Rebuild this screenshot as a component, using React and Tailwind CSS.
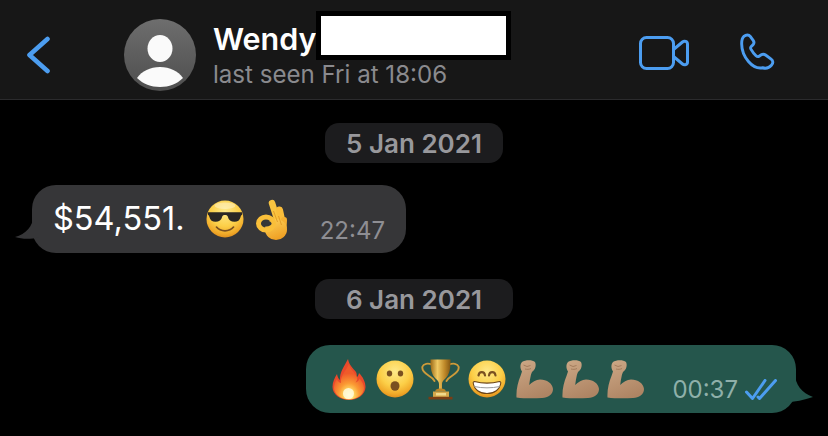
import React from "react";

const FaceGrad = ({ id }) => (
  <radialGradient id={id} cx="50%" cy="30%" r="72%">
    <stop offset="0" stopColor="#fee98a" />
    <stop offset="0.55" stopColor="#fccf48" />
    <stop offset="0.85" stopColor="#f0a828" />
    <stop offset="1" stopColor="#dc8a1c" />
  </radialGradient>
);

const Cool = () => (
  <svg width="38" height="38" viewBox="0 0 40 40" className="shrink-0">
    <defs>
      <FaceGrad id="cg" />
    </defs>
    <circle cx="20" cy="20" r="19.500" fill="url(#cg)" />
    <ellipse cx="20" cy="6" rx="11" ry="3.500" fill="#fff" opacity="0.35" />
    <path d="M2 13h36v2.600c-.8.300-1.200.8-1.500 2-.9 3.700-3.200 5.400-6.500 5.400-3.800 0-6.200-2-7-5.400-.3-1.200-1.200-1.700-3-1.700s-2.700.5-3 1.700c-.8 3.400-3.200 5.400-7 5.400-3.300 0-5.600-1.700-6.500-5.400-.3-1.200-.7-1.700-1.500-2z" fill="#2a2725" />
    <path d="M11 28.500c2.500 3 5.500 4 9 4s6.500-1 9-4" fill="none" stroke="#7a5020" strokeWidth="1.800" strokeLinecap="round" />
  </svg>
);

const Ok = () => (
  <svg width="32" height="41" viewBox="0 0 32 41" className="ml-[12px] shrink-0">
    <defs>
      <linearGradient id="og" x1="0" x2="0.4" y1="0" y2="1">
        <stop offset="0" stopColor="#fdd35a" />
        <stop offset="1" stopColor="#efa125" />
      </linearGradient>
    </defs>
    <g fill="none" strokeLinecap="round">
      <path d="M16 4l6 19" strokeWidth="6.500" stroke="#f9c440" />
      <path d="M23.500 11l3 14" strokeWidth="7" stroke="#fabd3a" />
      <path d="M28 21l-.5 9" strokeWidth="6" stroke="#f5b032" />
    </g>
    <ellipse cx="20" cy="30.500" rx="11" ry="10.500" fill="url(#og)" />
    <ellipse cx="10" cy="24.500" rx="7.500" ry="6.500" fill="none" stroke="#f9bf3a" strokeWidth="5" />
    <ellipse cx="10.500" cy="24.500" rx="5" ry="3" fill="#363638" />
    <path d="M17.500 12l4 11M22.500 17l3 9" fill="none" stroke="#dd9220" strokeWidth="0.800" />
  </svg>
);

const Fire = () => (
  <svg width="34" height="41" viewBox="0 0 34 41" className="shrink-0">
    <defs>
      <radialGradient id="fg" cx="50%" cy="88%" r="62%">
        <stop offset="0" stopColor="#fff9d0" />
        <stop offset="0.22" stopColor="#ffe06a" />
        <stop offset="0.55" stopColor="#fb9a33" />
        <stop offset="1" stopColor="#ef5a2a" />
      </radialGradient>
    </defs>
    <path d="M16 0c1 6 5 9 8 13 1 2 1 4 0 6 1.500-1 2.500-3 3-5 4 4 6.500 9 6.500 14 0 7-7.500 13-16.500 13S.5 35 .5 28c0-5 2-9 4.500-13 .5 3 1.500 5 3 6-.5-8 4-13 8-21z" fill="#e9492b" />
    <path d="M17 5c1 5 5 8 7.500 12 1.500 3 .5 5-1 6.500 2-.5 3.500-2 4-4 2.500 3 4.500 6 4.500 9.500 0 6.500-7 11.500-15 11.500S2 35 2 29c0-3.500 1-6.500 3-9 .5 2 2 3.500 4 4-1-7 5-12 8-19z" fill="url(#fg)" />
    <ellipse cx="16.500" cy="34.500" rx="5.500" ry="5.500" fill="#fffbe0" opacity="0.85" />
  </svg>
);

const Wow = () => (
  <svg width="38" height="38" viewBox="0 0 38 38" className="ml-[10px] shrink-0">
    <defs>
      <FaceGrad id="wg" />
    </defs>
    <circle cx="19" cy="19" r="18.500" fill="url(#wg)" />
    <ellipse cx="13.500" cy="13.500" rx="2.700" ry="3" fill="#7a5020" />
    <ellipse cx="24.500" cy="13.500" rx="2.700" ry="3" fill="#7a5020" />
    <ellipse cx="19" cy="26" rx="4.500" ry="4.800" fill="#7a5020" />
  </svg>
);

const Trophy = () => (
  <svg width="40" height="41" viewBox="0 0 40 41" className="ml-[7px] shrink-0">
    <defs>
      <linearGradient id="tg" x1="0" x2="1" y1="0" y2="0">
        <stop offset="0" stopColor="#9c6a18" />
        <stop offset="0.35" stopColor="#f0c963" />
        <stop offset="0.7" stopColor="#c08a2a" />
        <stop offset="1" stopColor="#845612" />
      </linearGradient>
    </defs>
    <path d="M11 5.500C7 4 2.500 4.500 1.500 7.500c-1 3.500 2 6.500 6 9 2.500 1.500 4.500 3 6 5.500M28 5.500c4-1.500 8.500-1 9.500 2 1 3.500-2 6.500-6 9-2.500 1.500-4.500 3-6 5.500" fill="none" stroke="#cd9b3a" strokeWidth="1.900" strokeLinecap="round" />
    <path d="M9.500 0.500h20c.3 8.500-1 15.500-5.500 19.500-1.700 1.500-3 2.500-3 5v7h-3v-7c0-2.500-1.300-3.500-3-5C10.500 16 9.200 9 9.500.5z" fill="url(#tg)" />
    <path d="M15 30.500c2-1.500 7-1.500 9 0l1 2H14z" fill="#b98428" />
    <path d="M12 32.500h16v5.500H12z" fill="#d6a74b" />
    <path d="M15 34h10v2.500H15z" fill="#f1d98c" />
    <path d="M7.500 37.800h24V40.500h-24z" fill="#7b3d14" />
  </svg>
);

const Grin = () => (
  <svg width="38" height="38" viewBox="0 0 38 38" className="ml-[7px] shrink-0">
    <defs>
      <FaceGrad id="gg" />
    </defs>
    <circle cx="19" cy="19" r="18.500" fill="url(#gg)" />
    <path d="M10.500 15.500c.6-4.500 6-4.500 6.500 0M21 15.500c.5-4.500 6-4.500 6.500 0" fill="none" stroke="#7a5020" strokeWidth="2.200" strokeLinecap="round" />
    <path d="M6.500 21.500c7.500 2 17.500 2 25 0 1 .1 1.400.7 1.300 1.500C31.800 29.500 26.500 33.500 19 33.500S6.200 29.500 5.200 23c-.1-.8.300-1.400 1.300-1.500z" fill="#fff" stroke="#6b4418" strokeWidth="1.100" />
    <path d="M6.200 26.500c8 1.800 17.600 1.800 25.600 0" fill="none" stroke="#9a9a9a" strokeWidth="1" />
  </svg>
);

const Arm = ({ id, className }) => (
  <svg width="37" height="39" viewBox="0 0 37 39" className={className}>
    <defs>
      <linearGradient id={id} x1="0.2" x2="0.6" y1="0" y2="1">
        <stop offset="0" stopColor="#cba684" />
        <stop offset="1" stopColor="#ae8463" />
      </linearGradient>
    </defs>
    <path d="M6 2c3-2 10-2.500 13 0 1.500 3 .5 8-3 10l-1 2.500c-.7 3.500-1.500 7-1.800 10.500C16 22 20 19.500 24 19.500c7 0 12.500 4 13 9.500 0 5.500-5 8.500-11 9-8.500.6-18 .5-25.500-.5C0 30 2 22 4.500 16L6 11.500C3.800 8.500 4 4 6 2z" fill={`url(#${id})`} />
    <path d="M7.500 5l3.500 1.500 3.500-1M9 9c2 .5 4 .5 6-.5" fill="none" stroke="#9a7454" strokeWidth="0.800" />
  </svg>
);

const Video = () => (
  <svg width="50" height="34" viewBox="0 0 50 34" fill="none" stroke="#4c9df0" strokeWidth="3" strokeLinejoin="round" className="shrink-0">
    <rect x="1.500" y="1.500" width="33" height="31" rx="6" />
    <path d="M34.500 13.500l9-7.500c1.800-1.500 5-.8 5 2v18c0 2.800-3.200 3.500-5 2l-9-7.500z" />
  </svg>
);

const Phone = () => (
  <svg width="40" height="40" viewBox="0 0 41 41" fill="none" stroke="#4c9df0" strokeWidth="3" strokeLinejoin="round" className="shrink-0">
    <path d="M4 3.500c2.300-2 5-2 6.500 0l3 4c1.200 1.700 1 3.300-.3 4.700l-1.700 1.600c-.8.800-.8 1.700-.3 2.700 1.500 2.700 3.300 5 5.200 6.800 1.100 1 2 1.300 3.200.5l2.200-1.400c1.500-.9 3-.8 4.400.2l5.700 4.200c2.200 1.600 2.300 4.100.3 6.300-2.300 2.600-5.300 3.600-9 2.500C13 37.700 1.800 24.500 1.700 11 1.700 7.800 2.300 5 4 3.500z" />
  </svg>
);

const Checks = () => (
  <svg width="32" height="21" viewBox="0 0 32 21" fill="none" stroke="#4c9df0" strokeWidth="3" strokeLinecap="round" strokeLinejoin="round" className="shrink-0">
    <path d="M1.500 13l6 6.500L20 1.500" />
    <path d="M13 18l1.500 1.500L30.500 1.500" />
  </svg>
);

export default function App() {
  const pill = "mx-auto flex h-10 w-fit items-center rounded-[14px] bg-[#1c1c1e] text-[26px] font-semibold text-[#98989c]";
  return (
    <div className="flex h-[436px] w-[828px] flex-col overflow-hidden bg-black font-['Inter',sans-serif]">
      <header className="flex h-[100px] shrink-0 items-center border-b border-[#2b2b2d] bg-[#171717] pt-[10px] pr-[48px] pl-[26px]">
        <svg width="25" height="38" viewBox="0 0 25 38" fill="none" stroke="#4c9df0" strokeWidth="4.600" strokeLinecap="round" strokeLinejoin="round" className="shrink-0">
          <path d="M21.500 3L3.500 19l18 16" />
        </svg>
        <div className="ml-[73px] h-[72px] w-[72px] shrink-0 overflow-hidden rounded-full bg-gradient-to-b from-[#6e6e6e] to-[#4e4e4e]">
          <svg width="72" height="72" viewBox="0 0 72 72" fill="#fafafa">
            <ellipse cx="36" cy="29.500" rx="12.500" ry="13.500" />
            <path d="M13 59C18 52 26 48 36 48s18 4 23 11C53 65 45 68 36 68s-17-3-23-9z" />
          </svg>
        </div>
        <div className="mt-[2px] ml-[17px] flex flex-col">
          <div className="relative">
            <span className="text-[30.500px] leading-[36px] font-semibold text-white">Wendy</span>
            <div className="absolute top-[-10px] left-[103px] h-[49px] w-[195px] border-[5px] border-black bg-white" />
          </div>
          <span className="mt-[3px] text-[24.100px] leading-[30px] text-[#8a8a8e]">last seen Fri at 18:06</span>
        </div>
        <div className="mb-[4px] ml-auto flex items-center gap-[51px]">
          <Video />
          <Phone />
        </div>
      </header>

      <main className="flex flex-1 flex-col pt-[23px]">
        <div className={`${pill} px-[21px]`}>5 Jan 2021</div>

        <div className="relative mt-[22px] ml-[32px] flex h-[68px] w-[374px] items-center rounded-[24px] bg-[#363638] pr-[21px] pl-[21px]">
          <svg width="24" height="22" viewBox="0 0 24 22" fill="#363638" className="absolute top-[32px] left-[-17px]">
            <path d="M18 0c0 9-7 17-18 20 7 2 14 2.500 24 .500V0z" />
          </svg>
          <span className="text-[32.500px] leading-none text-white">$54,551.</span>
          <div className="ml-[21px] flex items-center">
            <Cool />
            <Ok />
          </div>
          <span className="mt-[24px] ml-auto text-[24px] leading-none text-[#8e8e93]">22:47</span>
        </div>

        <div className={`${pill} mt-[26px] px-[31px]`}>6 Jan 2021</div>

        <div className="relative mt-[26px] ml-[306px] flex h-[68px] w-[490px] items-center rounded-[24px] bg-[#25564c] pr-[19px] pl-[26px]">
          <svg width="28" height="30" viewBox="0 0 28 30" fill="#25564c" className="absolute top-[28px] right-[-17px]">
            <path d="M10 0c0 12 7 20 18 24C19 27 10 29 0 29V0z" />
          </svg>
          <div className="flex items-center">
            <Fire />
            <Wow />
            <Trophy />
            <Grin />
            <Arm id="a1" className="ml-[10px] shrink-0" />
            <Arm id="a2" className="ml-[9px] shrink-0" />
            <Arm id="a3" className="ml-[8px] shrink-0" />
          </div>
          <span className="mt-[22px] ml-auto text-[24px] leading-none text-[#8fb0aa]">00:37</span>
          <div className="mt-[20px] ml-[7px]">
            <Checks />
          </div>
        </div>
      </main>
    </div>
  );
}
